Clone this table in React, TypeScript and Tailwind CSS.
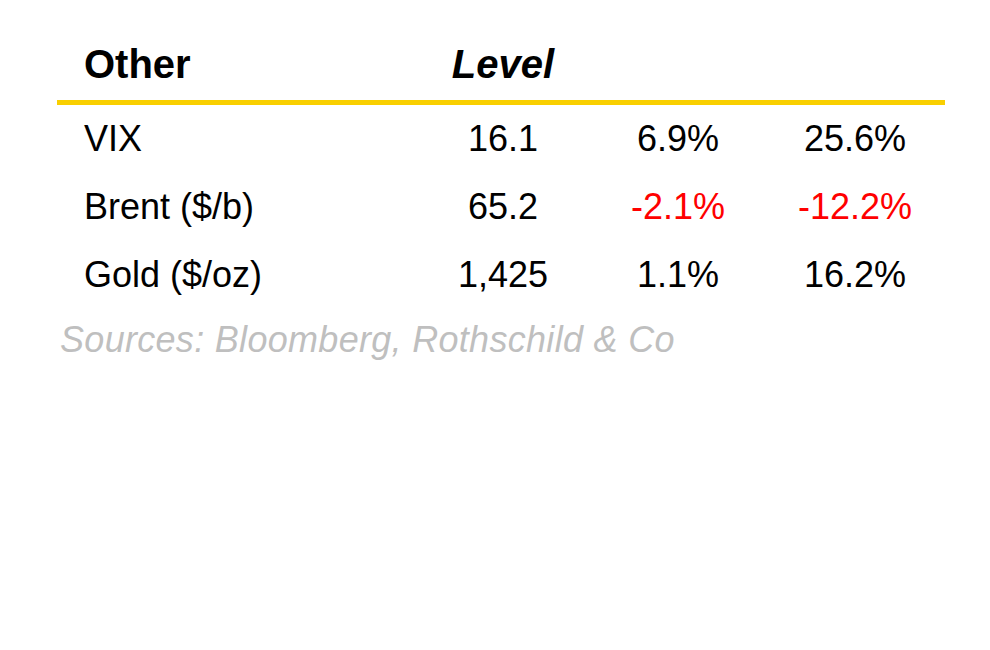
const rows = [
  { name: "VIX", level: "16.1", a: "6.9%", b: "25.6%", neg: false },
  { name: "Brent ($/b)", level: "65.2", a: "-2.1%", b: "-12.2%", neg: true },
  { name: "Gold ($/oz)", level: "1,425", a: "1.1%", b: "16.2%", neg: false },
];

const cols = "grid grid-cols-[358px_176px_174px_180px]";

export default function App() {
  return (
    <div className="w-[990px] h-[650px] bg-white pt-[30px] pl-[57px] text-[36px] text-black font-['Liberation_Sans',Arial,sans-serif]">
      <div className="w-[888px]">
        {/* Header */}
        <div className={`${cols} h-[68px] items-center font-bold text-[40px]`}>
          <div className="pl-[27px]">Other</div>
          <div className="text-center italic">Level</div>
          <div />
          <div />
        </div>
        <div className="mt-[2px] h-[5px] bg-[#f9cf00]" />

        {/* Rows */}
        {rows.map((r) => (
          <div key={r.name} className={`${cols} h-[68px] items-center`}>
            <div className="pl-[27px]">{r.name}</div>
            <div className="text-center">{r.level}</div>
            <div className={`text-center ${r.neg ? "text-[#ff0000]" : ""}`}>{r.a}</div>
            <div className={`text-center ${r.neg ? "text-[#ff0000]" : ""}`}>{r.b}</div>
          </div>
        ))}
      </div>

      <div className="h-[62px] flex items-center pl-[3px] italic text-[#bfbfbf] tracking-[0.3px]">
        Sources: Bloomberg, Rothschild &amp; Co
      </div>
    </div>
  );
}
